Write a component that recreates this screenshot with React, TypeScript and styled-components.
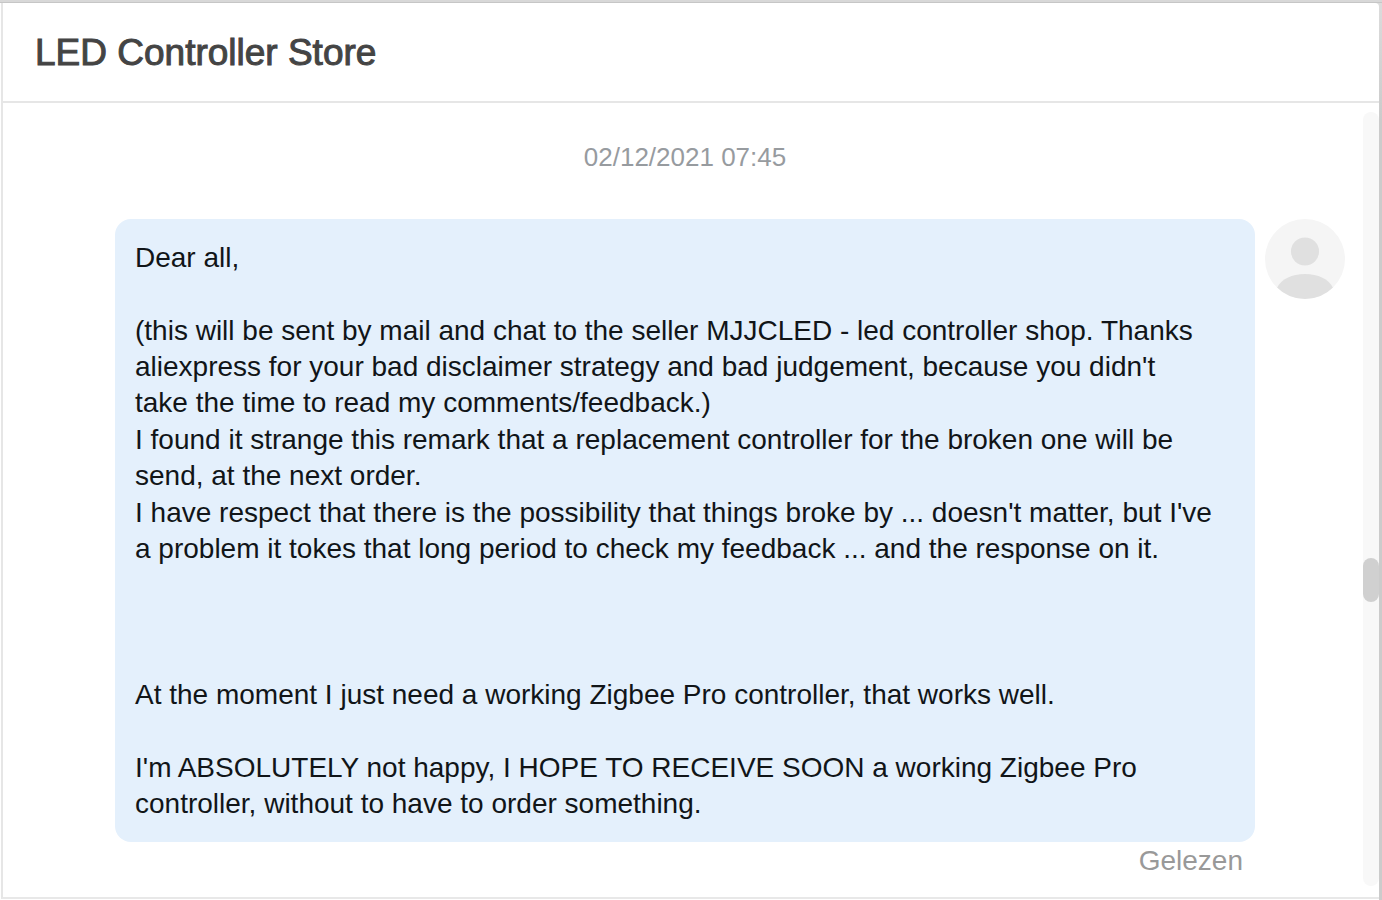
import React from "react";
import styled, { createGlobalStyle } from "styled-components";

const GlobalStyle = createGlobalStyle`
  *, *::before, *::after { box-sizing: border-box; }
  body {
    margin: 0;
    background: #ffffff;
    font-family: "Liberation Sans", Arial, Helvetica, sans-serif;
  }
`;

const Frame = styled.div`
  display: flex;
  flex-direction: column;
  min-height: 100vh;
  background: linear-gradient(#dcdcdc, #cbcbcb 120px);
`;

const TopShade = styled.div`
  height: 3px;
  background: linear-gradient(#d8d8d8 0 2px, #c6c6c6 2px);
`;

const Panel = styled.section`
  flex: 1;
  display: flex;
  flex-direction: column;
  margin-right: 3px;
  padding-left: 1px;
  border-top-right-radius: 4px;
  background: #ffffff;
`;

const Header = styled.header`
  display: flex;
  align-items: center;
  height: 100px;
  padding: 2px 32px 0;
  border-left: 2px solid #e6e6e6;
  border-bottom: 2px solid #e6e6e6;
`;

const Title = styled.h1`
  margin: 0;
  color: #444444;
  font-size: 37px;
  font-weight: 400;
  line-height: 40px;
  -webkit-text-stroke: 1px #444444;
`;

const Body = styled.div`
  flex: 1;
  display: flex;
  margin-bottom: 1px;
  border-left: 2px solid #e6e6e6;
  border-bottom: 2px solid #e8e8e8;
`;

const Conversation = styled.main`
  flex: 1;
  display: grid;
  grid-template-columns: minmax(0, 1fr) 80px;
  grid-template-rows: auto auto auto;
  align-content: start;
  column-gap: 10px;
  padding: 36px 18px 16px 112px;
`;

const Timestamp = styled.time`
  grid-column: 1;
  margin-bottom: 44px;
  color: #979b9f;
  font-size: 26px;
  line-height: 36px;
  text-align: center;
`;

const Bubble = styled.article`
  grid-column: 1;
  padding: 21px 20px 20px;
  border-radius: 16px;
  background: #e4f0fc;
  color: #111518;
  font-size: 28px;
  line-height: 36px;
`;

const Paragraph = styled.p<{ $space?: number }>`
  margin: ${({ $space = 0 }) => $space}px 0 0;
  white-space: pre-line;
`;

const Avatar = styled.svg`
  display: block;
  width: 80px;
  height: 80px;
`;

const ReadStatus = styled.span`
  grid-column: 1;
  padding: 1px 12px 0 0;
  color: #999999;
  font-size: 28px;
  line-height: 36px;
  text-align: right;
`;

const ScrollTrack = styled.div`
  display: grid;
  grid-template-rows: 446fr 44px 284fr;
  width: 16px;
  margin: 9px 0 11px;
  border-radius: 8px;
  background: #f8f8f8;
`;

const ScrollThumb = styled.div`
  grid-row: 2;
  border-radius: 8px;
  background: #d0d0d0;
`;

const paragraphs = [
  { space: 0, text: "Dear all," },
  {
    space: 37,
    text:
      "(this will be sent by mail and chat to the seller MJJCLED - led controller shop. Thanks\n" +
      "aliexpress for your bad disclaimer strategy and bad judgement, because you didn't\n" +
      "take the time to read my comments/feedback.)",
  },
  {
    space: 1,
    text:
      "I found it strange this remark that a replacement controller for the broken one will be\n" +
      "send, at the next order.",
  },
  {
    space: 1,
    text:
      "I have respect that there is the possibility that things broke by ... doesn't matter, but I've\n" +
      "a problem it tokes that long period to check my feedback ... and the response on it.",
  },
  {
    space: 110,
    text: "At the moment I just need a working Zigbee Pro controller, that works well.",
  },
  {
    space: 37,
    text:
      "I'm ABSOLUTELY not happy, I HOPE TO RECEIVE SOON a working Zigbee Pro\n" +
      "controller, without to have to order something.",
  },
];

function UserAvatar() {
  return (
    <Avatar viewBox="0 0 80 80" role="img" aria-label="User">
      <defs>
        <clipPath id="avatar-circle">
          <circle cx="40" cy="40" r="40" />
        </clipPath>
      </defs>
      <g clipPath="url(#avatar-circle)">
        <rect width="80" height="80" fill="#f5f5f5" />
        <circle cx="40" cy="32.5" r="14" fill="#e0e0e0" />
        <path d="M12 69C16 60 27 55 40 55S64 60 68 69V80H12Z" fill="#e0e0e0" />
      </g>
    </Avatar>
  );
}

export default function App() {
  return (
    <>
      <GlobalStyle />
      <Frame>
        <TopShade />
        <Panel>
          <Header>
            <Title>LED Controller Store</Title>
          </Header>
          <Body>
            <Conversation>
              <Timestamp dateTime="2021-12-02T07:45">02/12/2021 07:45</Timestamp>
              <Bubble>
                {paragraphs.map(({ space, text }) => (
                  <Paragraph key={text} $space={space}>
                    {text}
                  </Paragraph>
                ))}
              </Bubble>
              <UserAvatar />
              <ReadStatus>Gelezen</ReadStatus>
            </Conversation>
            <ScrollTrack>
              <ScrollThumb />
            </ScrollTrack>
          </Body>
        </Panel>
      </Frame>
    </>
  );
}
